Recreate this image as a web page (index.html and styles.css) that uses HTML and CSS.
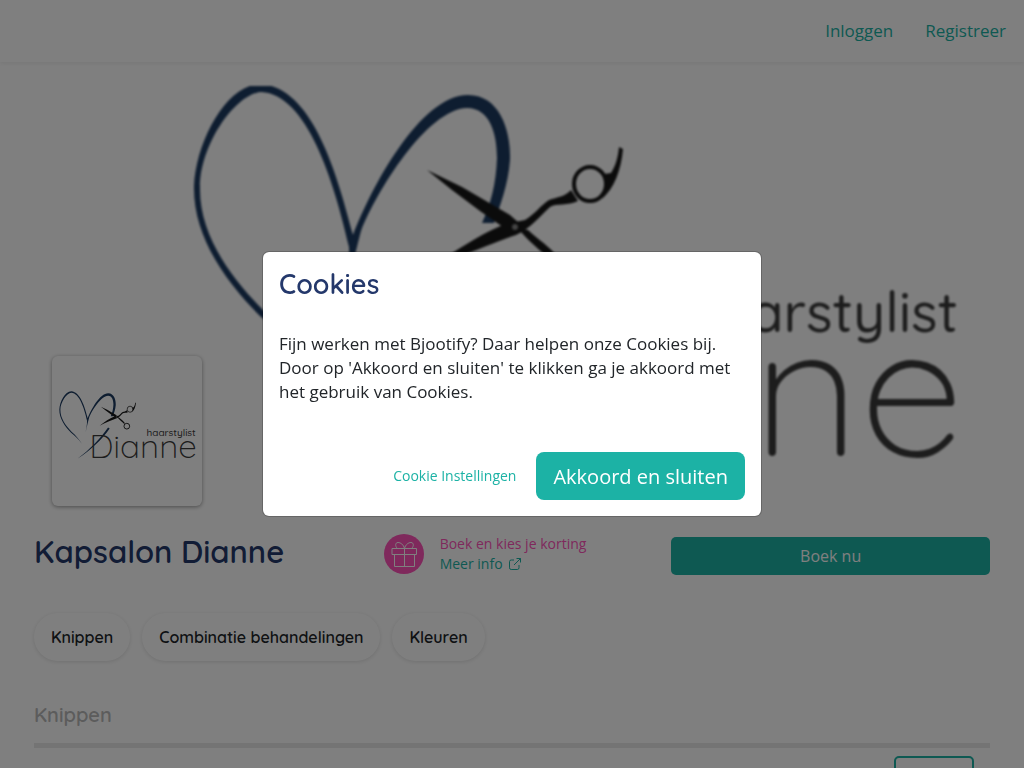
FILE: index.html
```html
<!DOCTYPE html>
<html lang="nl">
<head>
  <meta charset="UTF-8" />
  <meta name="viewport" content="width=device-width, initial-scale=1.0" />
  <title>Kapsalon Dianne</title>
  <link rel="stylesheet" href="styles.css">
</head>
<body>

  <svg class="sprite" aria-hidden="true">
    <defs>
      <g id="logo-art">
        <!-- heart -->
        <path fill="#1c3a60" d="M320 378C300 349 280 334 260 316C225 281 193 236 194 186C196 142 226 84 261 84C313 88 337 174 353 235C371 188 420 95 468 95C501 95 511 133 510 160C508 186 500 205 494 223L482 223C491 203 496 184 497 158C497 134 490 108 467 108C427 109 376 192 361 231C357 246 350 276 341 314C345 294 350 268 349 247C334 181 307 94 261 92C235 94 200 145 200 187C199 234 230 277 264 311C285 330 305 350 320 378Z"/>
        <path fill="#1c3a60" d="M295 461C365 410 422 350 467 286L476 292C432 354 371 414 295 461Z"/>
        <!-- scissors -->
        <path fill="#171717" d="M427 170L462 187L510 215L519 223L510 232L480 211L452 190Z"/>
        <path fill="#171717" d="M420 276C445 257 478 235 505 224L525 220C536 213 540 206 549 200C557 197 565 197 571 190L578 201C568 206 556 203 550 207C540 216 531 228 516 235C490 244 450 260 420 276Z"/>
        <path fill="#171717" d="M518 228L528 230C539 241 551 246 562 263L556 266C546 254 530 244 518 228Z"/>
        <ellipse cx="590" cy="184" rx="16" ry="17" fill="none" stroke="#171717" stroke-width="4"/>
        <circle cx="572" cy="279" r="16" fill="none" stroke="#171717" stroke-width="5"/>
        <path fill="#171717" d="M619 147L623 149C621 171 614 188 602 199C607 188 605 183 604 174L611 173C616 165 618 157 619 147Z"/>
        <circle cx="515" cy="227" r="3" fill="#888"/>
        <text class="logo-small" x="958" y="332" text-anchor="end">haarstylist</text>
        <text class="logo-large" x="964" y="456" text-anchor="end">Dianne</text>
      </g>
    </defs>
  </svg>

  <nav class="navbar">
    <a href="#">Inloggen</a>
    <a href="#">Registreer</a>
  </nav>

  <main class="container">
    <svg class="cover" viewBox="34 86 956 400" preserveAspectRatio="xMidYMid slice" role="img" aria-label="Dianne haarstylist">
      <use href="#logo-art"/>
    </svg>
    <div class="salon-logo">
      <svg viewBox="153 -114 840 840" role="img" aria-label="Logo">
        <use href="#logo-art"/>
      </svg>
    </div>

    <div class="salon-row">
      <h1>Kapsalon Dianne</h1>
      <div class="promo">
        <svg class="gift" viewBox="0 0 40 40" aria-hidden="true">
          <circle cx="20" cy="20" r="20"/>
          <path d="M8 14.500h24.500v6H8zM10.500 20.500v12h20v-12M20.500 14.500v18M20.500 14.500c-1-4-4-6-6.500-6-3 0-3 4-.500 6M20.500 14.500c1-4 4-6 6.500-6 3 0 3 4 .500 6"/>
        </svg>
        <div>
          <p>Boek en kies je korting</p>
          <a href="#">Meer info
            <svg class="external" viewBox="0 0 14 14" aria-hidden="true">
              <path d="M6 3H3.200Q1.500 3 1.500 4.700v6.100q0 1.700 1.700 1.700h6.100q1.700 0 1.700-1.700V8M8.500 1.500h4v4M12.500 1.500L6 8"/>
            </svg>
          </a>
        </div>
      </div>
      <button class="btn book">Boek nu</button>
    </div>

    <div class="categories">
      <button>Knippen</button>
      <button>Combinatie behandelingen</button>
      <button>Kleuren</button>
    </div>

    <h2>Knippen</h2>
    <div class="treatment">
      <button class="btn-outline" aria-label="Boek"></button>
    </div>
  </main>

  <div class="backdrop">
    <div class="modal" role="dialog" aria-labelledby="cookie-title">
      <h5 id="cookie-title">Cookies</h5>
      <p>Fijn werken met Bjootify? Daar helpen onze Cookies bij. Door op 'Akkoord en sluiten' te klikken ga je akkoord met het gebruik van Cookies.</p>
      <div class="modal-footer">
        <a href="#">Cookie Instellingen</a>
        <button class="btn btn-lg">Akkoord en sluiten</button>
      </div>
    </div>
  </div>

</body>
</html>
```
FILE: styles.css
```css
* {
  box-sizing: border-box;
}
body {
  margin: 0;
  overflow: hidden;
  font-family: "Open Sans", "Noto Sans", sans-serif;
  font-size: 17px;
  line-height: 24px;
  color: #212529;
  background: #fff;
}
a {
  color: #1cb2a5;
  text-decoration: none;
}
p, h1, h2, h5 {
  margin: 0;
}
h1, h2, h5, .categories button {
  font-family: Quicksand, Lato, sans-serif;
  font-weight: 600;
}
button {
  font-family: inherit;
  cursor: pointer;
}
.sprite {
  display: block;
  width: 0;
  height: 0;
}
.logo-small, .logo-large {
  font-family: Quicksand, Lato, sans-serif;
  fill: #3a3a3a;
}
.logo-small {
  font-size: 56px;
  font-weight: 500;
}
.logo-large {
  font-size: 187px;
  font-weight: 300;
}
.navbar {
  display: flex;
  justify-content: flex-end;
  gap: 32px;
  height: 62px;
  padding: 19px 18px;
  box-shadow: 0 2px 4px rgba(0,0,0,0.06);
}
.container {
  padding: 24px 34px;
}
.cover {
  display: block;
  width: 100%;
  height: 400px;
  filter: blur(1px);
}
.salon-logo {
  position: relative;
  width: 150px;
  height: 150px;
  margin: -130px 0 0 18px;
  background: #fff;
  border-radius: 6px;
  box-shadow: 0 1px 4px rgba(0,0,0,0.4);
}
.salon-logo svg {
  display: block;
  width: 100%;
}
.salon-row {
  display: grid;
  grid-template-columns: repeat(3, 1fr);
  margin-top: 28px;
}
h1 {
  font-size: 31px;
  line-height: 36px;
  color: #24386b;
}
.promo {
  display: flex;
  gap: 16px;
  padding-left: 31px;
  font-size: 14px;
  line-height: 20px;
  color: #ff52b9;
}
.gift {
  width: 40px;
  height: 40px;
}
.gift circle {
  fill: #ff52b9;
}
.gift path {
  fill: none;
  stroke: #fff;
}
.external {
  width: 14px;
  height: 14px;
  margin-left: 2px;
  vertical-align: -2px;
  fill: none;
  stroke: #1cb2a5;
}
.btn {
  border: 0;
  border-radius: 5px;
  background: #1cb2a5;
  color: #fff;
  font-size: 16px;
}
.book {
  height: 38px;
  margin-top: 3px;
}
.categories {
  display: flex;
  gap: 12px;
  margin-top: 38px;
}
.categories button {
  height: 48px;
  padding: 0 17px;
  border: 0;
  border-radius: 24px;
  background: #fff;
  color: #212529;
  font-size: 16px;
  box-shadow: 0 1px 4px rgba(0,0,0,0.12);
}
h2 {
  margin-top: 42px;
  padding-bottom: 16px;
  border-bottom: 5px solid #e8e8e8;
  font-size: 20px;
  line-height: 24px;
  color: #b8b8b8;
}
.treatment {
  display: flex;
  justify-content: flex-end;
  padding: 8px 16px;
}
.btn-outline {
  width: 80px;
  height: 38px;
  border: 2px solid #1cb2a5;
  border-radius: 5px;
  background: #fff;
}
.backdrop {
  position: fixed;
  inset: 0;
  display: flex;
  align-items: center;
  justify-content: center;
  background: rgba(0,0,0,0.5);
}
.modal {
  width: 500px;
  padding: 16px;
  background: #fff;
  background-clip: padding-box;
  border: 1px solid rgba(0,0,0,0.2);
  border-radius: 7px;
}
.modal h5 {
  margin-bottom: 32px;
  font-size: 27px;
  line-height: 32px;
  color: #24386b;
}
.modal-footer {
  display: flex;
  align-items: center;
  justify-content: flex-end;
  gap: 20px;
  margin-top: 48px;
  font-size: 14px;
}
.btn-lg {
  height: 48px;
  padding: 0 17px;
  border-radius: 8px;
  font-size: 20px;
}
```
